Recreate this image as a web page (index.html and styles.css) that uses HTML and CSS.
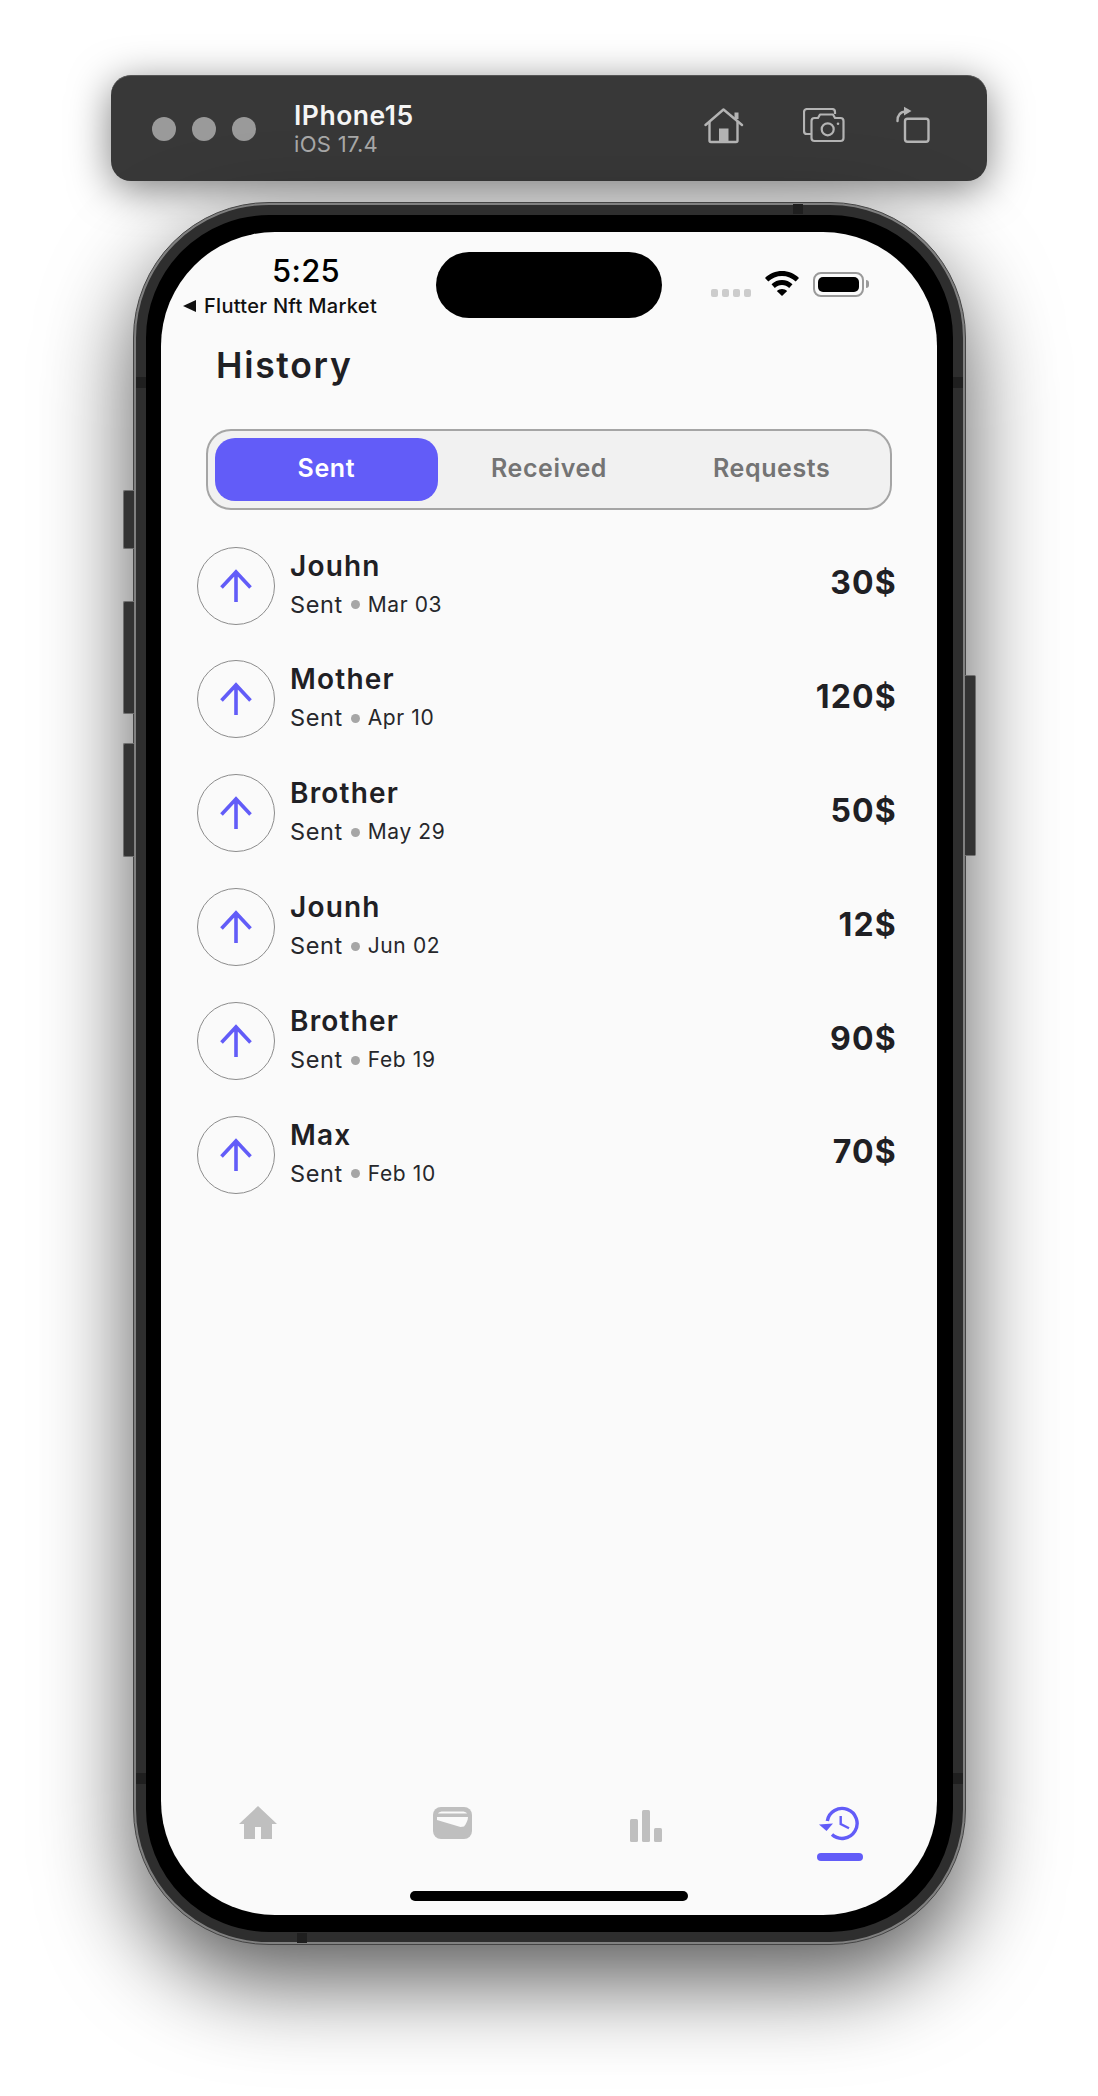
FILE: index.html
```html
<!DOCTYPE html>
<html lang="en">
<head>
    <meta charset="UTF-8">
    <meta name="viewport" content="width=device-width, initial-scale=1.0">
    <title>History</title>
    <link rel="stylesheet" href="styles.css">
</head>
<body>
    <div class="sim-toolbar">
        <div class="traffic">
            <span></span><span></span><span></span>
        </div>
        <div class="sim-title">
            <div class="sim-name">IPhone15</div>
            <div class="sim-os">iOS 17.4</div>
        </div>
        <div class="sim-actions">
            <svg class="sim-home" width="40" height="36" viewBox="0 0 40 36" fill="none" stroke="#b4b4b4" stroke-width="2.4" stroke-linejoin="round" stroke-linecap="round">
                <path d="M1.5 17 19.5 1.500 38 17"/>
                <path d="M5.500 14V32.500a1.500 1.500 0 0 0 1.500 1.500H32a1.500 1.500 0 0 0 1.500-1.500V14"/>
                <path d="M32.500 4.500V11" stroke-width="4" stroke-linecap="butt"/>
                <rect x="15" y="20.500" width="9.500" height="13" fill="#b4b4b4" stroke="none"/>
            </svg>
            <svg class="sim-shot" width="44" height="35" viewBox="0 0 44 35" fill="none" stroke="#b4b4b4" stroke-width="2.200" stroke-linejoin="round">
                <path d="M8 26H4a3 3 0 0 1-3-3V4a3 3 0 0 1 3-3h25a3 3 0 0 1 3 3v2"/>
                <path d="M8.500 13a3 3 0 0 1 3-3h3.500l2-3.500h13l2 3.500h5.500a3 3 0 0 1 3 3v17a3 3 0 0 1-3 3h-26a3 3 0 0 1-3-3z"/>
                <circle cx="24.700" cy="21.300" r="6"/>
                <circle cx="35" cy="15.700" r="1.300" fill="#b4b4b4" stroke="none"/>
            </svg>
            <svg class="sim-rotate" width="34" height="37" viewBox="0 0 34 37" fill="none" stroke="#b4b4b4" stroke-width="2.400" stroke-linejoin="round">
                <rect x="9" y="12.700" width="23.500" height="23" rx="2.500"/>
                <path d="M1.500 15C1.500 9.500 4 6 9 5.500" stroke-linecap="round"/>
                <path d="M8 0.800 15.500 5 8 9.500z" fill="#b4b4b4" stroke="none"/>
            </svg>
        </div>
    </div>

    <div class="phone">
        <span class="side-btn mute"></span>
        <span class="side-btn vol-up"></span>
        <span class="side-btn vol-down"></span>
        <span class="side-btn power"></span>
        <span class="band band-top"></span>
        <span class="band band-bottom"></span>
        <span class="band band-l1"></span>
        <span class="band band-l2"></span>
        <span class="band band-r1"></span>
        <span class="band band-r2"></span>

        <div class="bezel">
            <div class="screen">
                <div class="island"></div>
                <div class="status-bar">
                    <div class="status-left">
                        <div class="clock">5:25</div>
                        <div class="back-app"><span class="back-tri"></span>Flutter Nft Market</div>
                    </div>
                    <div class="status-right">
                        <div class="signal"><span></span><span></span><span></span><span></span></div>
                        <svg class="wifi" width="34" height="25" viewBox="0 0 34 25" fill="#000000">
                            <path d="M17 0C10.500 0 4.700 2.500 0 6.900l3.300 3.700C7 7 11.800 5 17 5s10 2 13.700 5.600L34 6.900C29.300 2.500 23.500 0 17 0z"/>
                            <path d="M17 9c-4 0-7.700 1.500-10.500 4.200l3.300 3.700C11.800 15 14.300 14 17 14s5.200 1 7.200 2.900l3.300-3.700C24.700 10.500 21 9 17 9z"/>
                            <path d="M17 18c-2 0-3.800.7-5.200 2L17 25l5.200-5c-1.400-1.300-3.200-2-5.200-2z"/>
                        </svg>
                        <div class="battery"><div class="battery-fill"></div></div>
                        <span class="battery-nub"></span>
                    </div>
                </div>

                <h1 class="page-title">History</h1>

                <div class="tabs">
                    <div class="tab active">Sent</div>
                    <div class="tab">Received</div>
                    <div class="tab">Requests</div>
                </div>

                <div class="tx-list">
                    <div class="tx-row">
                        <div class="tx-icon"><svg width="34" height="34" viewBox="0 0 34 34"><path d="M17 33V3M2.500 18.500 17 3l14.500 15.500"/></svg></div>
                        <div class="tx-info">
                            <div class="tx-name">Jouhn</div>
                            <div class="tx-meta">Sent<span class="dot"></span><span class="tx-date">Mar 03</span></div>
                        </div>
                        <div class="tx-amount">30$</div>
                    </div>
                    <div class="tx-row">
                        <div class="tx-icon"><svg width="34" height="34" viewBox="0 0 34 34"><path d="M17 33V3M2.500 18.500 17 3l14.500 15.500"/></svg></div>
                        <div class="tx-info">
                            <div class="tx-name">Mother</div>
                            <div class="tx-meta">Sent<span class="dot"></span><span class="tx-date">Apr 10</span></div>
                        </div>
                        <div class="tx-amount">120$</div>
                    </div>
                    <div class="tx-row">
                        <div class="tx-icon"><svg width="34" height="34" viewBox="0 0 34 34"><path d="M17 33V3M2.500 18.500 17 3l14.500 15.500"/></svg></div>
                        <div class="tx-info">
                            <div class="tx-name">Brother</div>
                            <div class="tx-meta">Sent<span class="dot"></span><span class="tx-date">May 29</span></div>
                        </div>
                        <div class="tx-amount">50$</div>
                    </div>
                    <div class="tx-row">
                        <div class="tx-icon"><svg width="34" height="34" viewBox="0 0 34 34"><path d="M17 33V3M2.500 18.500 17 3l14.500 15.500"/></svg></div>
                        <div class="tx-info">
                            <div class="tx-name">Jounh</div>
                            <div class="tx-meta">Sent<span class="dot"></span><span class="tx-date">Jun 02</span></div>
                        </div>
                        <div class="tx-amount">12$</div>
                    </div>
                    <div class="tx-row">
                        <div class="tx-icon"><svg width="34" height="34" viewBox="0 0 34 34"><path d="M17 33V3M2.500 18.500 17 3l14.500 15.500"/></svg></div>
                        <div class="tx-info">
                            <div class="tx-name">Brother</div>
                            <div class="tx-meta">Sent<span class="dot"></span><span class="tx-date">Feb 19</span></div>
                        </div>
                        <div class="tx-amount">90$</div>
                    </div>
                    <div class="tx-row">
                        <div class="tx-icon"><svg width="34" height="34" viewBox="0 0 34 34"><path d="M17 33V3M2.500 18.500 17 3l14.500 15.500"/></svg></div>
                        <div class="tx-info">
                            <div class="tx-name">Max</div>
                            <div class="tx-meta">Sent<span class="dot"></span><span class="tx-date">Feb 10</span></div>
                        </div>
                        <div class="tx-amount">70$</div>
                    </div>
                </div>

                <div class="bottom-nav">
                    <div class="nav-item">
                        <svg width="38" height="33" viewBox="0 0 38 33" fill="#bfbfbf"><path d="M19 0 38 18H33V33H22V21H16V33H5V18H0z"/></svg>
                    </div>
                    <div class="nav-item wallet">
                        <svg width="39" height="32" viewBox="0 0 39 32">
                            <rect width="39" height="32" rx="8" fill="#bfbfbf"/>
                            <path d="M5 6.500C6 5 8 4.500 10 4.500H29C31 4.500 33 5 34 6.500z" fill="#fafafa"/>
                            <path d="M4 10H35C35 13 33 17 31 19.500L27.500 20 4 13z" fill="#fafafa"/>
                        </svg>
                    </div>
                    <div class="nav-item bars">
                        <svg width="32" height="32" viewBox="0 0 32 32" fill="#bfbfbf"><rect x="0" y="9" width="8" height="23" rx="1.500"/><rect x="12" y="0" width="8" height="32" rx="1.500"/><rect x="24" y="18" width="8" height="14" rx="1.500"/></svg>
                    </div>
                    <div class="nav-item current">
                        <svg width="42" height="36" viewBox="0 0 42 36" fill="none">
                            <path d="M8.300 16A15 15 0 1 1 13 29.500" stroke="#625cf8" stroke-width="3.400"/>
                            <path d="M0 19.500 14 18.500 7.500 26z" fill="#625cf8"/>
                            <path d="M21.700 11V19L30 23.300" stroke="#625cf8" stroke-width="2.400"/>
                        </svg>
                        <span class="nav-bar"></span>
                    </div>
                </div>
                <div class="home-indicator"></div>
            </div>
        </div>
    </div>
</body>
</html>
```

FILE: styles.css
```css
* {
    box-sizing: border-box;
}

html, body {
    margin: 0;
    padding: 0;
}

body {
    width: 1098px;
    height: 2096px;
    background-color: #ffffff;
    font-family: Inter, "Liberation Sans", sans-serif;
    padding-top: 75px;
    overflow: hidden;
}

/* simulator title bar */
.sim-toolbar {
    display: flex;
    align-items: center;
    width: 876px;
    height: 106px;
    margin-left: 111px;
    padding-left: 41px;
    background-color: #383838;
    border-radius: 20px;
    border-top: 1px solid #555555;
    box-shadow: 0 8px 40px rgba(0, 0, 0, 0.5);
}

.traffic {
    display: flex;
    gap: 16px;
    margin-right: 38px;
}

.traffic span {
    width: 24px;
    height: 24px;
    border-radius: 50%;
    background-color: #9a9a9a;
}

.sim-title {
    margin-top: -1px;
}

.sim-name {
    color: #f5f5f5;
    font-size: 26.5px;
    font-weight: 600;
    line-height: 30px;
    letter-spacing: 0.5px;
}

.sim-os {
    color: #a8a8a8;
    font-size: 22px;
    line-height: 26px;
    letter-spacing: 0.3px;
    margin-top: 1px;
}

.sim-actions {
    display: flex;
    align-items: center;
    margin-left: auto;
    margin-right: 57px;
    margin-bottom: 6px;
}

.sim-home {
    margin-right: 59px;
}

.sim-shot {
    margin-right: 49px;
}

.sim-rotate {
    margin-bottom: 3px;
}

/* device frame */
.phone {
    position: relative;
    width: 833px;
    height: 1743px;
    margin: 21px 0 0 133px;
    padding: 2px;
    border: 1px solid #444444;
    border-radius: 136px;
    background-color: #808080;
    box-shadow: 0 36px 90px rgba(0, 0, 0, 0.65);
}

.bezel {
    height: 100%;
    padding: 17px 16px 17px 15px;
    border-radius: 133px;
    background-color: #000000;
    border: 10px solid #2e2e2e;
}

.side-btn {
    position: absolute;
    width: 11px;
    left: -11px;
    background-color: #333333;
    border: 1px solid #6f6f6f;
    border-right: none;
    border-radius: 2px 0 0 2px;
}

.mute { top: 287px; height: 59px; }
.vol-up { top: 398px; height: 113px; }
.vol-down { top: 540px; height: 114px; }

.power {
    left: auto;
    right: -11px;
    top: 472px;
    height: 181px;
    border: 1px solid #6f6f6f;
    border-left: none;
    border-radius: 0 2px 2px 0;
}

.band {
    position: absolute;
    background-color: #1f1f1f;
}

.band-top { left: 659px; top: 1px; width: 10px; height: 10px; }
.band-bottom { left: 163px; bottom: 1px; width: 10px; height: 10px; }
.band-l1 { left: 2px; top: 174px; width: 10px; height: 11px; }
.band-l2 { left: 2px; top: 1570px; width: 10px; height: 11px; }
.band-r1 { right: 2px; top: 174px; width: 10px; height: 11px; }
.band-r2 { right: 2px; top: 1570px; width: 10px; height: 11px; }

.screen {
    position: relative;
    display: flex;
    flex-direction: column;
    height: 100%;
    background-color: #fafafa;
    border-radius: 114px;
    overflow: hidden;
}

.island {
    position: absolute;
    top: 20px;
    left: 275px;
    width: 226px;
    height: 66px;
    border-radius: 33px;
    background-color: #000000;
}

/* status bar */
.status-bar {
    display: flex;
    justify-content: space-between;
    height: 86px;
    padding: 21px 68px 0 22px;
}

.status-left {
    display: flex;
    flex-direction: column;
    align-items: center;
}

.clock {
    margin-left: 52px;
    font-size: 31px;
    font-weight: 500;
    letter-spacing: 0.3px;
    line-height: 36px;
    color: #000000;
}

.back-app {
    display: flex;
    align-items: center;
    font-size: 20px;
    line-height: 24px;
    font-weight: 500;
    letter-spacing: 0.3px;
    margin-top: 5px;
    color: #111111;
}

.back-tri {
    width: 0;
    height: 0;
    margin-right: 8px;
    border-top: 6px solid transparent;
    border-bottom: 6px solid transparent;
    border-right: 13px solid #111111;
}

.status-right {
    display: flex;
    align-items: flex-start;
    padding-top: 19px;
}

.signal {
    display: flex;
    gap: 4px;
    margin-top: 17px;
    margin-right: 14px;
}

.signal span {
    width: 7px;
    height: 8px;
    border-radius: 2px;
    background-color: #cccccc;
}

.wifi {
    margin-top: -1px;
    margin-right: 14px;
}

.battery {
    width: 51px;
    height: 25px;
    padding: 3px;
    border: 2px solid #9a9a9a;
    border-radius: 8px;
}

.battery-fill {
    height: 100%;
    border-radius: 5px;
    background-color: #000000;
}

.battery-nub {
    width: 3px;
    height: 8px;
    margin-top: 8px;
    margin-left: 2px;
    border-radius: 0 3px 3px 0;
    background-color: #9a9a9a;
}

/* page */
.page-title {
    margin: 26px 0 0 55px;
    font-size: 35.5px;
    line-height: 44px;
    font-weight: 600;
    letter-spacing: 1.7px;
    color: #1f2024;
}

.tabs {
    display: flex;
    width: 686px;
    height: 81px;
    margin: 41px 0 0 45px;
    padding: 7px;
    border: 2px solid #a5a5a5;
    border-radius: 25px;
    background-color: #f1f1f1;
}

.tab {
    flex: 1;
    display: flex;
    align-items: center;
    justify-content: center;
    padding-bottom: 4px;
    font-size: 25px;
    font-weight: 600;
    letter-spacing: 0.6px;
    color: #747474;
    border-radius: 20px;
}

.tab.active {
    background-color: #625cf8;
    color: #ffffff;
}

.tx-list {
    display: flex;
    flex-direction: column;
    gap: 35.9px;
    margin: 36.5px 41px 0 36px;
}

.tx-row {
    display: flex;
    align-items: center;
    height: 78px;
}

.tx-icon {
    display: flex;
    align-items: center;
    justify-content: center;
    width: 78px;
    height: 78px;
    margin-right: 15px;
    border: 1.5px solid #8c8c8c;
    border-radius: 50%;
}

.tx-icon svg {
    fill: none;
    stroke: #625cf8;
    stroke-width: 3.6;
}

.tx-info {
    margin-bottom: 4px;
}

.tx-name {
    font-size: 28px;
    font-weight: 600;
    line-height: 34px;
    letter-spacing: 1.2px;
    color: #1f2024;
}

.tx-meta {
    display: flex;
    align-items: center;
    margin-top: 8px;
    font-size: 23.5px;
    line-height: 28px;
    letter-spacing: 0.6px;
    color: #26272b;
}

.tx-date {
    font-size: 21px;
    letter-spacing: 0.6px;
}

.dot {
    width: 9px;
    height: 9px;
    margin: 0 8px;
    border-radius: 50%;
    background-color: #a6a6a6;
}

.tx-amount {
    margin-left: auto;
    margin-right: -1px;
    margin-bottom: 6px;
    font-size: 32px;
    font-weight: 700;
    letter-spacing: 1.2px;
    color: #1f2024;
}

/* bottom tab bar */
.bottom-nav {
    display: grid;
    grid-template-columns: repeat(4, 1fr);
    margin-top: auto;
    height: 72px;
    margin-bottom: 40px;
}

.nav-item {
    display: flex;
    flex-direction: column;
    align-items: center;
    padding-top: 3px;
}

.nav-item.wallet {
    padding-top: 4px;
}

.nav-item.bars {
    padding-top: 7px;
}

.nav-item.current {
    padding-top: 2px;
}

.nav-bar {
    width: 46px;
    height: 8px;
    margin-top: 12px;
    border-radius: 4px;
    background-color: #625cf8;
}

.home-indicator {
    position: absolute;
    left: 249px;
    bottom: 14px;
    width: 278px;
    height: 10px;
    border-radius: 5px;
    background-color: #000000;
}
```
